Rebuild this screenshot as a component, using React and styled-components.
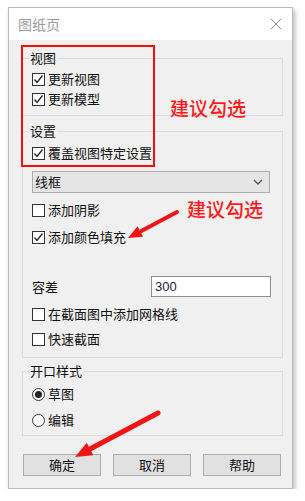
import React from "react";
import styled, { createGlobalStyle } from "styled-components";

const GlobalStyle = createGlobalStyle`
  * { box-sizing: border-box; }
  body {
    margin: 0;
    background: #ffffff;
    font-family: "Noto Sans CJK SC", "Noto Sans", sans-serif;
  }
`;

const Window = styled.div`
  position: relative;
  margin: 7px 0 0 8px;
  width: 285px;
  height: 482px;
  border: 1px solid #bcbcbc;
  background: #f0f0f0;
  box-shadow: 2px 3px 5px rgba(0, 0, 0, 0.28);
  font-size: 13px;
  color: #111;
`;

const TitleBar = styled.div`
  height: 32px;
  background: #ffffff;
  display: flex;
  align-items: center;
  justify-content: space-between;
  padding: 0 10px 0 9px;
`;

const Title = styled.span`
  font-size: 14px;
  color: #9c9c9c;
  line-height: 18px;
`;

const Body = styled.div`
  padding: 10px 9px 0 13px;
  display: flex;
  flex-direction: column;
`;

const Group = styled.fieldset`
  margin: ${(p) => p.$top || 0}px 0 0 0;
  min-width: 0;
  border: 1px solid #dcdcdc;
  padding: ${(p) => p.$pt}px 9px ${(p) => p.$pb}px 9px;
  display: flex;
  flex-direction: column;
`;

const Legend = styled.legend`
  padding: 0 1px;
  margin-left: -3px;
  line-height: 16px;
  font-size: 13px;
`;

const Row = styled.label`
  display: flex;
  align-items: center;
  gap: 3px;
  height: 20px;
  line-height: 20px;
  margin-top: ${(p) => p.$top || 0}px;
  white-space: nowrap;
`;

const Box = styled.span`
  width: 13px;
  height: 13px;
  border: 1px solid #333;
  background: #fff;
  display: flex;
  align-items: center;
  justify-content: center;
  flex: none;
`;

const Radio = styled.span`
  width: 13px;
  height: 13px;
  border: 1px solid #333;
  border-radius: 50%;
  background: #fff;
  display: flex;
  align-items: center;
  justify-content: center;
  flex: none;
  &::after {
    content: "";
    width: 7px;
    height: 7px;
    border-radius: 50%;
    background: ${(p) => (p.$on ? "#222" : "transparent")};
  }
`;

const Select = styled.div`
  margin-top: 8px;
  height: 22px;
  width: 238px;
  border: 1px solid #adadad;
  background: #e5e5e5;
  display: flex;
  align-items: center;
  justify-content: space-between;
  padding: 0 6px 0 2px;
  line-height: 20px;
`;

const FieldRow = styled.div`
  margin-top: 29px;
  height: 21px;
  display: flex;
  align-items: center;
`;

const FieldLabel = styled.span`
  width: 119px;
  line-height: 20px;
`;

const Input = styled.div`
  width: 120px;
  height: 21px;
  border: 1px solid #8f8f8f;
  background: #fff;
  padding: 0 3px;
  font-family: "Liberation Sans", Arial, sans-serif;
  font-size: 13px;
  line-height: 19px;
  color: #1c1c3c;
`;

const ButtonRow = styled.div`
  margin-top: 18px;
  display: flex;
  gap: 12px;
  padding-left: 1px;
`;

const Button = styled.div`
  width: 78px;
  height: 22px;
  border: 1px solid #adadad;
  background: #e1e1e1;
  display: flex;
  align-items: center;
  justify-content: center;
  line-height: 20px;
`;

const Highlight = styled.div`
  position: absolute;
  left: 12px;
  top: 37px;
  width: 134px;
  height: 122px;
  border: 2px solid #f01010;
`;

const Note = styled.div`
  position: absolute;
  left: ${(p) => p.$x}px;
  top: ${(p) => p.$y}px;
  font-size: 19px;
  line-height: 22px;
  font-weight: 500;
  color: #ff1a1a;
  white-space: nowrap;
`;

const Overlay = styled.svg`
  position: absolute;
  left: -1px;
  top: -1px;
  pointer-events: none;
`;

function Check({ on }) {
  return (
    <Box>
      {on && (
        <svg width="11" height="11" viewBox="0 0 11 11">
          <polyline points="1.5,5.5 4,8.5 9.5,1.5" fill="none" stroke="#222" strokeWidth="1.3" />
        </svg>
      )}
    </Box>
  );
}

function Arrow({ x1, y1, x2, y2, w, len, half }) {
  const dx = x2 - x1;
  const dy = y2 - y1;
  const d = Math.hypot(dx, dy);
  const ux = dx / d;
  const uy = dy / d;
  const bx = x2 - ux * len;
  const by = y2 - uy * len;
  const px = -uy * half;
  const py = ux * half;
  return (
    <g fill="#f01414" stroke="#f01414">
      <line x1={x1} y1={y1} x2={bx} y2={by} strokeWidth={w} strokeLinecap="round" />
      <polygon points={`${x2},${y2} ${bx + px},${by + py} ${bx - px},${by - py}`} stroke="none" />
    </g>
  );
}

export default function App() {
  return (
    <>
      <GlobalStyle />
      <Window>
        <TitleBar>
          <Title>图纸页</Title>
          <svg width="12" height="12" viewBox="0 0 12 12">
            <path d="M1 1 L11 11 M11 1 L1 11" stroke="#8a8a8a" strokeWidth="1" fill="none" />
          </svg>
        </TitleBar>
        <Body>
          <Group $pt={3} $pb={6}>
            <Legend>视图</Legend>
            <Row><Check on />更新视图</Row>
            <Row><Check on />更新模型</Row>
          </Group>
          <Group $top={7} $pt={4} $pb={8}>
            <Legend>设置</Legend>
            <Row><Check on />覆盖视图特定设置</Row>
            <Select>
              <span>线框</span>
              <svg width="10" height="6" viewBox="0 0 10 6">
                <polyline points="1,1 5,5 9,1" fill="none" stroke="#555" strokeWidth="1.3" />
              </svg>
            </Select>
            <Row $top={7}><Check />添加阴影</Row>
            <Row $top={7}><Check on />添加颜色填充</Row>
            <FieldRow>
              <FieldLabel>容差</FieldLabel>
              <Input>300</Input>
            </FieldRow>
            <Row $top={7}><Check />在截面图中添加网格线</Row>
            <Row $top={5}><Check />快速截面</Row>
          </Group>
          <Group $top={5} $pt={5} $pb={5}>
            <Legend>开口样式</Legend>
            <Row><Radio $on />草图</Row>
            <Row $top={6}><Radio />编辑</Row>
          </Group>
          <ButtonRow>
            <Button>确定</Button>
            <Button>取消</Button>
            <Button>帮助</Button>
          </ButtonRow>
        </Body>
        <Highlight />
        <Note $x={161} $y={89}>建议勾选</Note>
        <Note $x={178} $y={190}>建议勾选</Note>
        <Overlay width="300" height="490">
          <Arrow x1={169} y1={205} x2={120} y2={231} w={4} len={14} half={6} />
          <Arrow x1={150} y1={406} x2={67} y2={450} w={5} len={17} half={7} />
        </Overlay>
      </Window>
    </>
  );
}
